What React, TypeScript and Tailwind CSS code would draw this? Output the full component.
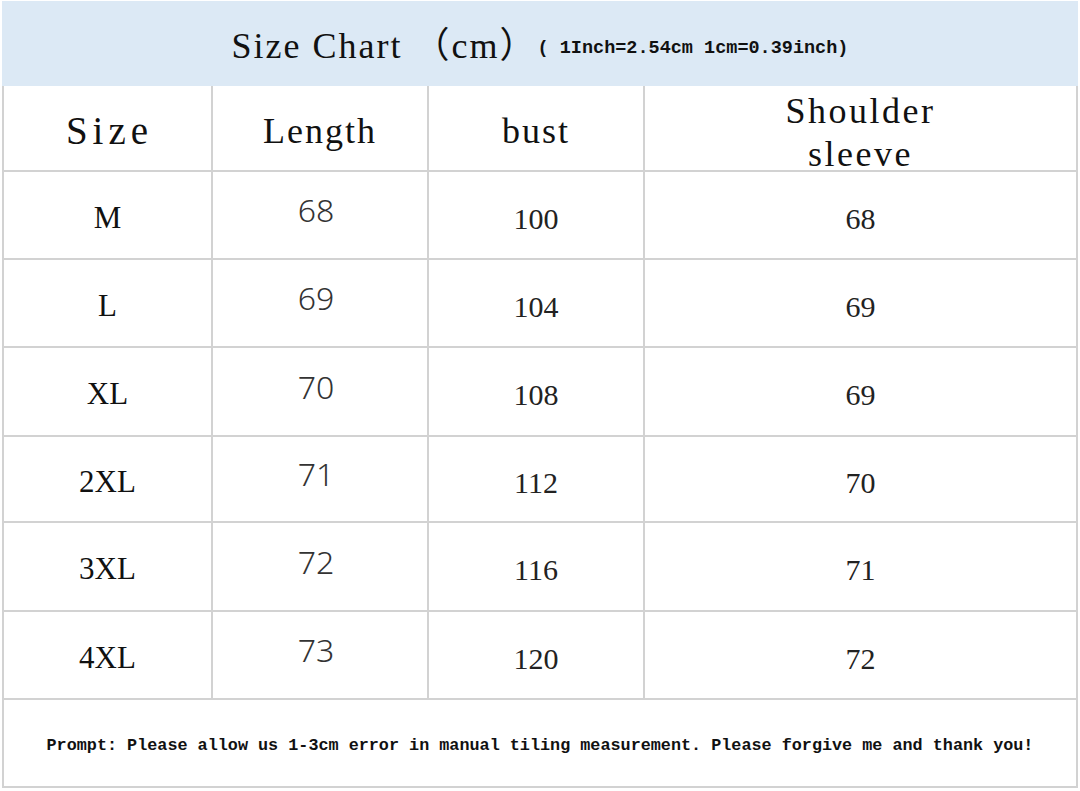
import React from 'react';

const rows = [
  { size: 'M', length: '68', bust: '100', shoulder: '68', h: 'h-[88px]' },
  { size: 'L', length: '69', bust: '104', shoulder: '69', h: 'h-[88px]' },
  { size: 'XL', length: '70', bust: '108', shoulder: '69', h: 'h-[89px]' },
  { size: '2XL', length: '71', bust: '112', shoulder: '70', h: 'h-[86px]' },
  { size: '3XL', length: '72', bust: '116', shoulder: '71', h: 'h-[89px]' },
  { size: '4XL', length: '73', bust: '120', shoulder: '72', h: 'h-[88px]' },
];

const serif = "font-['Liberation_Serif','Noto_Sans_CJK_SC',serif]";
const mono = "font-['Liberation_Mono',monospace]";
const cols = 'grid grid-cols-[209px_216px_216px_1fr]';
const cell = 'flex items-center justify-center border-r-2 border-[#d2d2d2]';

export default function App() {
  return (
    <div className="w-[1080px] h-[791px] bg-white overflow-hidden pt-[1px] pl-[2px] pr-[2px]">
      {/* Title band */}
      <div className="h-[85px] bg-[#dce9f5] flex items-center justify-center pt-[4px]">
        <span className={`${serif} text-[36px] tracking-[2px] text-[#111]`}>Size Chart （cm）</span>
        <span className={`${mono} text-[18.5px] font-bold text-[#111] mt-[6px]`}>( 1Inch=2.54cm 1cm=0.39inch)</span>
      </div>

      <div className="border-l-2 border-[#d2d2d2]">
        {/* Column headers */}
        <div className={`${cols} h-[86px] border-b-2 border-[#d2d2d2]`}>
          <div className={cell}>
            <span className={`${serif} text-[39px] tracking-[5px] text-[#111] pl-[4px]`}>Size</span>
          </div>
          <div className={cell}>
            <span className={`${serif} text-[36px] tracking-[2px] text-[#111]`}>Length</span>
          </div>
          <div className={cell}>
            <span className={`${serif} text-[36px] tracking-[2px] text-[#111]`}>bust</span>
          </div>
          <div className={`${cell} flex-col`}>
            <span className={`${serif} text-[36px] tracking-[2.5px] leading-[43px] text-[#111] text-center pt-[4px]`}>
              Shoulder
              <br />
              sleeve
            </span>
          </div>
        </div>

        {/* Data rows */}
        {rows.map((r) => (
          <div key={r.size} className={`${cols} ${r.h} border-b-2 border-[#d2d2d2]`}>
            <div className={cell}>
              <span className={`${serif} text-[31px] text-[#111] pt-[6px]`}>{r.size}</span>
            </div>
            <div className={cell}>
              <span className="font-['Noto_Sans',sans-serif] font-light text-[32px] text-[#333] pb-[10px] pr-[8px]">{r.length}</span>
            </div>
            <div className={cell}>
              <span className={`${serif} text-[30px] text-[#222] pt-[6px]`}>{r.bust}</span>
            </div>
            <div className={cell}>
              <span className={`${serif} text-[30px] text-[#222] pt-[6px]`}>{r.shoulder}</span>
            </div>
          </div>
        ))}

        {/* Footer note */}
        <div className="h-[88px] border-r-2 border-b-2 border-[#d2d2d2] flex items-center justify-center pt-[6px]">
          <span className={`${mono} text-[16.8px] font-bold text-[#111] whitespace-nowrap`}>
            Prompt: Please allow us 1-3cm error in manual tiling measurement. Please forgive me and thank you!
          </span>
        </div>
      </div>
    </div>
  );
}
